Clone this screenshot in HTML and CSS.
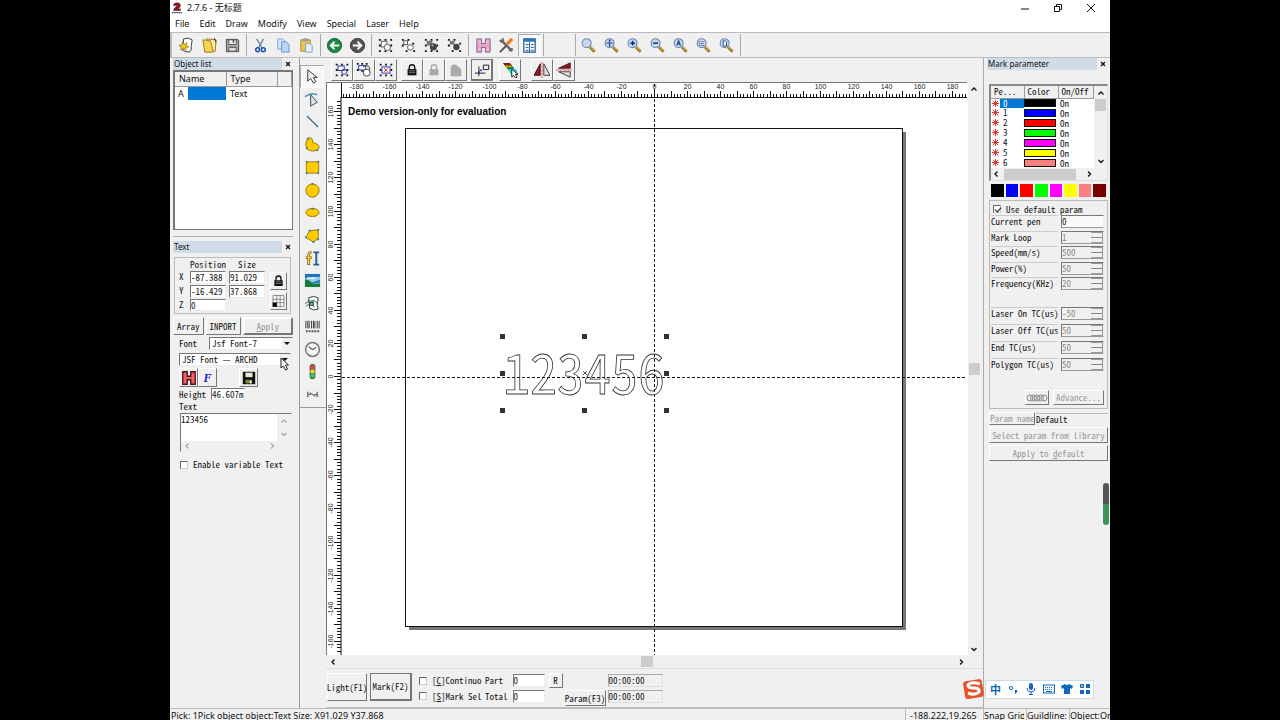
FILE: index.html
```html
<!DOCTYPE html>
<html lang="en">
<head>
<meta charset="utf-8">
<title>2.7.6 - 无标题</title>
<link rel="stylesheet" href="styles.css">
</head>
<body>
<svg class="defs" aria-hidden="true">
  <symbol id="glass" viewBox="0 0 18 18"><path d="M10.500 10.500l5 5" stroke="#94731c" stroke-width="3"/><path d="M10.500 10l4.500 4.500" stroke="#e8cc68" stroke-width="1"/><circle cx="7" cy="6.500" r="4.700" fill="#c5d8f2" stroke="#7189ae" stroke-width="1.200"/></symbol>
  <symbol id="dots" viewBox="0 0 18 18"><path d="M2 2h2v2H2zM8 2h2v2H8zM14 2h2v2h-2zM2 8h2v2H2zM14 8h2v2h-2zM2 14h2v2H2zM8 14h2v2H8zM14 14h2v2h-2z" fill="#111"/></symbol>
  <symbol id="lock" viewBox="0 0 18 18"><path d="M6 9V6q0-3 3-3t3 3v3" fill="none" stroke="currentColor" stroke-width="1.600"/><path d="M4 8h10v7H4z" fill="currentColor"/><path d="M5.500 10h7M5.500 12h7" stroke="#aaa" stroke-width=".7"/></symbol>
  <symbol id="up" viewBox="0 0 8 8"><path d="M1.500 5.500L4 3l2.500 2.500" fill="none" stroke="currentColor" stroke-width="1.300"/></symbol>
  <symbol id="down" viewBox="0 0 8 8"><path d="M1.500 3L4 5.500 6.500 3" fill="none" stroke="currentColor" stroke-width="1.300"/></symbol>
  <symbol id="left" viewBox="0 0 8 8"><path d="M5.500 1.500L3 4l2.500 2.500" fill="none" stroke="currentColor" stroke-width="1.300"/></symbol>
  <symbol id="right" viewBox="0 0 8 8"><path d="M3 1.500L5.500 4 3 6.500" fill="none" stroke="currentColor" stroke-width="1.300"/></symbol>
  <symbol id="cross" viewBox="0 0 8 8"><path d="M2 2l4 4M6 2L2 6" stroke="#111" stroke-width="1.300"/></symbol>
  <symbol id="spark" viewBox="0 0 10 10"><path d="M5 1v8M1 5h8M2 2l6 6M8 2L2 8" stroke="#e02020" stroke-width="1"/></symbol>
  <symbol id="hatch" viewBox="0 0 18 18"><path d="M2 2h5v5h4V2h5v14h-5v-5H7v5H2z" fill="#eaa8bb" stroke="#765da0" stroke-width="1"/><path d="M3 5h3M3 13h3M12 5h3M12 13h3" stroke="#f6d5de"/></symbol>
</svg>
<div class="app">
  <header class="titlebar">
    <svg class="logo" viewBox="0 0 14 14"><path d="M3 4q0-3 4-3t4 3-5 4h5v2H3q0-3 5-6H5z" fill="#a31526" stroke="#301018" stroke-width=".6"/><path d="M1 12.500h12" stroke="#37457d" stroke-width="1.500" stroke-dasharray="2 .6"/></svg>
    <h1>2.7.6 - 无标题</h1>
    <div class="window-buttons">
      <button aria-label="Minimize"><svg viewBox="0 0 12 12"><path d="M2 7h8" stroke="#111"/></svg></button>
      <button aria-label="Restore"><svg viewBox="0 0 12 12"><path d="M2.500 4.500h5v5h-5zM4.500 4V2.500h5v5H8" fill="none" stroke="#111"/></svg></button>
      <button aria-label="Close"><svg viewBox="0 0 12 12"><path d="M2 2l8 8M10 2l-8 8" stroke="#111"/></svg></button>
    </div>
  </header>
  <nav class="menu"><button>File</button><button>Edit</button><button>Draw</button><button>Modify</button><button>View</button><button>Special</button><button>Laser</button><button>Help</button></nav>

  <div class="toolbar">
    <button aria-label="New"><svg viewBox="0 0 18 18"><path d="M6 2q5-2 9 1l-1 7q1 4-2 6-4 0-7-2z" fill="#fff" stroke="#333"/><path d="M5 5l1.500 3 3-2-1 3 3 1.500-3.500.5.500 3-2.500-2L3 14l.500-3L1 9l3-.5z" fill="#f8c81a" stroke="#8a6500" stroke-width=".7"/></svg></button>
    <button aria-label="Open"><svg viewBox="0 0 18 18"><path d="M6 2l10 1-1 12-9 1z" fill="#fff0a0" stroke="#967018"/><path d="M2 3l8 1 3 12-9 0z" fill="#f6d45a" stroke="#a47a12"/><path d="M14 1l2 5" stroke="#333"/></svg></button>
    <button aria-label="Save"><svg viewBox="0 0 18 18"><path d="M2.500 2.500h12l1 1v12h-13z" fill="#aaa" stroke="#444"/><path d="M5 3h8v5H5z" fill="#eee" stroke="#555"/><path d="M5 11h8v4H5z" fill="#ddd" stroke="#555"/><path d="M10 3v3" stroke="#444" stroke-width="1.500"/></svg></button>
    <span class="sep"></span>
    <button aria-label="Cut"><svg viewBox="0 0 18 18"><path d="M5 2l6 10M12 2L7 12" stroke="#7089aa" stroke-width="1.500"/><circle cx="6" cy="13.500" r="2" fill="none" stroke="#1553b0" stroke-width="1.600"/><circle cx="12" cy="13.500" r="2" fill="none" stroke="#1553b0" stroke-width="1.600"/></svg></button>
    <button aria-label="Copy"><svg viewBox="0 0 18 18"><path d="M3 2h5l3 3v8H3z" fill="#d7e6fb" stroke="#7c9ed0"/><path d="M7 5h5l3 3v8H7z" fill="#bad4f7" stroke="#6d91c8"/></svg></button>
    <button aria-label="Paste"><svg viewBox="0 0 18 18"><path d="M3 3h10v12H3z" fill="#eac84e" stroke="#a9862c"/><path d="M6 2h4v2H6z" fill="#bbb" stroke="#888"/><path d="M8 7h5l2 2v7H8z" fill="#e6f0ff" stroke="#84a0c7"/></svg></button>
    <span class="sep"></span>
    <button aria-label="Undo"><svg viewBox="0 0 18 18"><circle cx="9" cy="9" r="7.500" fill="#188a42" stroke="#0d5f2c"/><path d="M14 9H5m4-4L5 9l4 4" fill="none" stroke="#fff" stroke-width="2"/></svg></button>
    <button aria-label="Redo"><svg viewBox="0 0 18 18"><circle cx="9" cy="9" r="7.500" fill="#555" stroke="#333"/><path d="M4 9h9M9 5l4 4-4 4" fill="none" stroke="#fff" stroke-width="2"/></svg></button>
    <span class="sep"></span>
    <button aria-label="Combine"><svg viewBox="0 0 18 18"><use href="#dots"/><rect x="4.500" y="4.500" width="6" height="6" fill="#fff" stroke="#555"/><circle cx="11" cy="11" r="3.300" fill="#fff" stroke="#555"/></svg></button>
    <button aria-label="Uncombine"><svg viewBox="0 0 18 18"><path d="M2 2h2v2H2zM8 2h2v2H8zM2 8h2v2H2zM13 6h2v2h-2zM6 14h2v2H6zM14 14h2v2h-2z" fill="#111"/><rect x="4" y="4" width="4" height="4" fill="#fff" stroke="#555"/><circle cx="11" cy="11" r="3" fill="#fff" stroke="#555"/></svg></button>
    <button aria-label="Group"><svg viewBox="0 0 18 18"><use href="#dots"/><rect x="4" y="4" width="6" height="5" fill="#777"/><circle cx="11" cy="10.500" r="3.800" fill="#444"/><circle cx="10" cy="9" r="1" fill="#bbb"/></svg></button>
    <button aria-label="Ungroup"><svg viewBox="0 0 18 18"><path d="M2 2h2v2H2zM8 2h2v2H8zM2 8h2v2H2zM14 6h2v2h-2zM6 14h2v2H6zM14 14h2v2h-2z" fill="#111"/><rect x="4" y="4" width="5" height="4" fill="#777"/><circle cx="11" cy="10.500" r="3.400" fill="#444"/></svg></button>
    <span class="sep sep-wide"></span>
    <button aria-label="Hatch"><svg viewBox="0 0 18 18"><use href="#hatch"/></svg></button>
    <button aria-label="Settings"><svg viewBox="0 0 18 18"><path d="M3 3l12 12" stroke="#666" stroke-width="2.500"/><path d="M2 3q1 4 4 2L5 1M12 15q0-4 4-2" fill="none" stroke="#666" stroke-width="1.500"/><path d="M2 16l7-7" stroke="#555" stroke-width="2"/><path d="M9 8l6-6" stroke="#ec7f22" stroke-width="3.500"/></svg></button>
    <button class="pressed" aria-label="Object list"><svg viewBox="0 0 18 18"><path d="M3 2h12v14H3z" fill="#fff" stroke="#1d5797" stroke-width="1.300"/><path d="M3 3.500h12" stroke="#2e73bd" stroke-width="3"/><path d="M9 5v11" stroke="#1d5797"/><path d="M5 8h3M5 11h3M5 14h3M10.500 8h3M10.500 11h3M10.500 14h3" stroke="#174b84"/></svg></button>
    <span class="sep sep-end"></span>
    <button aria-label="Zoom window"><svg viewBox="0 0 18 18"><use href="#glass"/></svg></button>
    <button aria-label="Pan"><svg viewBox="0 0 18 18"><use href="#glass"/><path d="M7 3v7M3.500 6.500h7M6 4l1-1 1 1M6 9l1 1 1-1" fill="none" stroke="#18468e"/></svg></button>
    <button aria-label="Zoom in"><svg viewBox="0 0 18 18"><use href="#glass"/><path d="M7 4v5M4.500 6.500h5" stroke="#102c68" stroke-width="1.600"/></svg></button>
    <button aria-label="Zoom out"><svg viewBox="0 0 18 18"><use href="#glass"/><path d="M4.500 6.500h5" stroke="#102c68" stroke-width="1.600"/></svg></button>
    <button aria-label="Zoom all"><svg viewBox="0 0 18 18"><use href="#glass"/><path d="M5 9l2-5 2 5M5.500 7.500h3" fill="none" stroke="#18468e" stroke-width="1.200"/></svg></button>
    <button aria-label="Zoom selection"><svg viewBox="0 0 18 18"><use href="#glass"/><path d="M4 5h6M4 7h6M4 9h6" stroke="#18468e" stroke-dasharray="1 1"/></svg></button>
    <button aria-label="Zoom page"><svg viewBox="0 0 18 18"><use href="#glass"/><path d="M5.500 4h2l1.500 1.500v4H5.500z" fill="#fff" stroke="#18468e"/></svg></button>
    <span class="sep"></span>
  </div>

  <div class="main">
    <aside class="side-left">
      <section>
        <div class="pane-head"><h2>Object list</h2><button aria-label="Close"><svg viewBox="0 0 8 8"><use href="#cross"/></svg></button></div>
        <div class="object-list">
          <table>
            <thead><tr><th class="c-name">Name</th><th class="c-type">Type</th><th></th></tr></thead>
            <tbody><tr><td><div class="name-cell">A<span></span></div></td><td class="type-cell">Text</td><td></td></tr></tbody>
          </table>
        </div>
      </section>
      <section class="text-pane">
        <div class="pane-head"><h2>Text</h2><button aria-label="Close"><svg viewBox="0 0 8 8"><use href="#cross"/></svg></button></div>
        <div class="group pos-group">
          <div class="pos-grid">
            <span></span><span class="pos-title">Position</span><span class="pos-title">Size</span>
            <label for="px">X</label><input id="px" value="-87.388"><input aria-label="Width" value="91.029">
            <label for="py">Y</label><input id="py" value="-16.429"><input aria-label="Height" value="37.868">
            <label for="pz">Z</label><input id="pz" value="0">
          </div>
          <div class="pos-buttons">
            <button class="raised" aria-label="Lock ratio"><svg viewBox="0 0 18 18"><use href="#lock"/></svg></button>
            <button class="raised" aria-label="Anchor"><svg viewBox="0 0 18 18"><path d="M2.500 2.500h13v13h-13zM7 2v14M11 2v14M2 7h14M2 11h14" fill="#fff" stroke="#777"/><path d="M2 11h5v5H2z"/></svg></button>
          </div>
        </div>
        <div class="row actions"><button class="raised">Array</button><button class="raised">INPORT</button><button class="raised grow" disabled><u>A</u>pply</button></div>
        <div class="row font-row"><label for="fonttype">Font</label><select id="fonttype"><option>Jsf Font-7</option></select></div>
        <div class="font-name"><select aria-label="Font name"><option>JSF Font — ARCHD</option></select></div>
        <div class="row font-tools">
          <button class="raised" aria-label="Hatch"><svg viewBox="0 0 18 18"><path d="M2 2h5v5h4V2h5v14h-5v-5H7v5H2z" fill="#f06068" stroke="#481018" stroke-width="1.500"/></svg></button>
          <button class="raised fbtn"><i>F</i></button>
          <button class="raised save" aria-label="Save"><svg viewBox="0 0 18 18"><path d="M2 2h14v14H2z" fill="#111"/><path d="M5 3h8v5H5z" fill="#e8e8d8"/><path d="M5 11h7v4H5z" fill="#838b32"/><path d="M10 12h2v3h-2z" fill="#fff"/></svg></button>
        </div>
        <div class="row height-row"><label for="hh">Height</label><input id="hh" value="46.607m"></div>
        <label class="text-label" for="txt">Text</label>
        <div class="textbox">
          <textarea id="txt">123456</textarea>
          <div class="vs"><svg viewBox="0 0 8 8"><use href="#up"/></svg><svg viewBox="0 0 8 8"><use href="#down"/></svg></div>
          <div class="hs"><svg viewBox="0 0 8 8"><use href="#left"/></svg><svg viewBox="0 0 8 8"><use href="#right"/></svg></div>
        </div>
        <label class="check variable"><input type="checkbox">Enable variable Text</label>
      </section>
      <svg class="pointer" viewBox="0 0 10 14"><path d="M1 1v10l2.500-2 2 4 2-1-2-4h3z" fill="#fff" stroke="#222"/></svg>
    </aside>

    <div class="work">
      <div class="tools">
        <button class="pressed" aria-label="Pick"><svg viewBox="0 0 18 18"><path d="M4 2v12l3-3 3 5 2.500-1.500L10 10h4z" fill="#eef2f7" stroke="#333"/></svg></button>
        <button aria-label="Node"><svg viewBox="0 0 18 18"><path d="M1 6q7-5 13-2" fill="none" stroke="#4e94b6" stroke-width="1.500"/><path d="M7 4v12l7-4z" fill="#dde5ee" stroke="#444"/></svg></button>
        <button aria-label="Line"><svg viewBox="0 0 18 18"><path d="M4 4l10 10" stroke="#345" stroke-width="1.200"/><path d="M3 3h2v2H3zM13 13h2v2h-2z" fill="#4791c5"/></svg></button>
        <button aria-label="Curve"><svg viewBox="0 0 18 18"><path d="M4 2q6-1 5 5 7 1 7 6-2 3-7 3-8-1-7-8z" fill="#fc0" stroke="#9b7400"/><path d="M3 2h2v2H3zM2 12h2v2H2zM13 14h2v2h-2z" fill="#30849a"/></svg></button>
        <button aria-label="Rectangle"><svg viewBox="0 0 18 18"><path d="M2.500 3h13v12h-13z" fill="#fc0" stroke="#a97900"/><path d="M2 2h2v2H2zM14 2h2v2h-2zM2 14h2v2H2zM14 14h2v2h-2z" fill="#30849a"/></svg></button>
        <button aria-label="Circle"><svg viewBox="0 0 18 18"><circle cx="9" cy="9" r="7" fill="#fc0" stroke="#9b7400"/><path d="M8 1h2v2H8z" fill="#30849a"/></svg></button>
        <button aria-label="Ellipse"><svg viewBox="0 0 18 18"><ellipse cx="9" cy="9" rx="7" ry="4.300" fill="#fc0" stroke="#9b7400"/><path d="M8 4h2v2H8z" fill="#30849a"/></svg></button>
        <button aria-label="Polygon"><svg viewBox="0 0 18 18"><path d="M6 4l9-1v9l-5 4-8-5z" fill="#fc0" stroke="#9b7400"/><path d="M5 3h2v2H5zM14 2h2v2h-2zM14 12h2v2h-2zM1 10h2v2H1zM9 15h2v2H9z" fill="#30849a"/></svg></button>
        <button aria-label="Text"><svg viewBox="0 0 18 18"><path d="M8 3Q5 2 5 6v10M2 8h6" fill="none" stroke="#7a5b10" stroke-width="3"/><path d="M8 3Q5 2 5 6v9M2.500 8h5" fill="none" stroke="#fc3" stroke-width="1.600"/><path d="M10 2.500h6M13 3v12M10 15.500h6" stroke="#1e618f" stroke-width="2"/></svg></button>
        <button aria-label="Bitmap"><svg viewBox="0 0 18 18"><path d="M1 2h16v14H1z" fill="#8fd0ee"/><path d="M1 2h16v3q-8 0-16 2z" fill="#2871bd"/><path d="M3 6.500h9" stroke="#fff" stroke-width="1.500"/><path d="M1 8q5 0 9 5l7-1v4H1z" fill="#147a38"/><path d="M8 11l9-3v3l-7 2z" fill="#2c87b0"/></svg></button>
        <button aria-label="Vector file"><svg viewBox="0 0 18 18"><path d="M5 3q5-3 10 0l-1 8 1 4q-5 2-9-1z" fill="#fff" stroke="#333"/><path d="M1 9q9-6 13 0M2 12l9-7M4 5l7 8" fill="none" stroke="#27694f"/><path d="M6 8h4v3H6z" fill="#69b8b5" stroke="#333"/></svg></button>
        <button aria-label="Barcode"><svg viewBox="0 0 18 18"><path d="M2 3v8M4 3v8M5.500 3v8M8 3v8M10 3v8M11.500 3v8M14 3v8M16 3v8" stroke="#333"/><path d="M2 14h14" stroke="#555" stroke-width="2" stroke-dasharray="2 1"/></svg></button>
        <button aria-label="Timer"><svg viewBox="0 0 18 18"><circle cx="9" cy="9" r="7.300" fill="#f6f6f6" stroke="#777" stroke-width="1.600"/><path d="M5 6l4 3 4-2" fill="none" stroke="#555" stroke-width="1.200"/></svg></button>
        <button aria-label="Input port"><svg viewBox="0 0 18 18"><rect x="6" y="1" width="6" height="16" rx="3" fill="#365e43"/><circle cx="9" cy="4.500" r="2.500" fill="#e3414c"/><circle cx="9" cy="9" r="2.500" fill="#f2cb36"/><circle cx="9" cy="13.500" r="2.500" fill="#3dbd60"/></svg></button>
        <button aria-label="Encoder"><svg viewBox="0 0 18 18"><path d="M4 6v6M14 6v6M4 9h3M11 9h3M6 7l6 4" stroke="#555" stroke-width="1.200"/></svg></button>
      </div>
      <div class="center">
        <div class="subbar">
          <button class="raised" aria-label="Transform"><svg viewBox="0 0 18 18"><use href="#dots"/><rect x="4.500" y="4.500" width="7" height="5" fill="#fff" stroke="#2424ae"/><circle cx="11.500" cy="11" r="3" fill="none" stroke="#2424ae"/></svg></button>
          <button class="raised" aria-label="Rotate"><svg viewBox="0 0 18 18"><path d="M1 1h2v2H1zM6 1h2v2H6zM11 1h2v2h-2zM1 8h2v2H1zM6 9h2v2H6z" fill="#111"/><path d="M3 4h8v5H3z" fill="none" stroke="#2424ae"/><path d="M8 5q9-3 7 5" fill="none" stroke="#333"/><circle cx="12" cy="12" r="4" fill="#fff" stroke="#333"/></svg></button>
          <button class="raised" aria-label="Center"><svg viewBox="0 0 18 18"><use href="#dots"/><rect x="4.500" y="5.500" width="9" height="7" fill="#fff" stroke="#2424ae"/><path d="M7 7l4 4M11 7l-4 4" stroke="#d22"/></svg></button>
          <button class="raised g4" aria-label="Lock"><svg viewBox="0 0 18 18"><use href="#lock"/></svg></button>
          <button class="raised dim" aria-label="Unlock"><svg viewBox="0 0 18 18"><use href="#lock"/></svg></button>
          <button class="raised dim" aria-label="Unlock all"><svg viewBox="0 0 18 18"><path d="M3 8q0-6 6-5l6 5v8H3z" fill="currentColor"/></svg></button>
          <button class="raised g4 framed" aria-label="Origin"><svg viewBox="0 0 18 18"><path d="M5.500 5v11M1 12.500h12" stroke="#111"/><path d="M10.500 3.500h6v5h-6z" fill="none" stroke="#111"/><path d="M5 12l4-4" stroke="#33c" stroke-width="2" stroke-dasharray="2 1"/></svg></button>
          <button class="raised g5" aria-label="Order"><svg viewBox="0 0 18 18"><path d="M1 1h8l3 4v3H8V5H4z" fill="#6e241c"/><path d="M3 4h7l3 4H6z" fill="#d4a900"/><path d="M5 6h8l2 4H8z" fill="#078c31"/><path d="M7 8h9l2 6h-8z" fill="#19d8e6"/><path d="M11 8v9l2-2 2 3 2-1-2-3h3z" fill="#fff" stroke="#111"/></svg></button>
          <button class="raised g10" aria-label="Mirror horizontally"><svg viewBox="0 0 18 18"><path d="M7 2v13H0z" fill="#8d1b24" stroke="#391014"/><path d="M11 2v13h7z" fill="#ddd" stroke="#333"/><path d="M9 0v18" stroke="#d33" stroke-dasharray="3 1"/></svg></button>
          <button class="raised" aria-label="Mirror vertically"><svg viewBox="0 0 18 18"><path d="M16 1v6H3z" fill="#8d1b24" stroke="#391014"/><path d="M16 17v-6H3z" fill="#ddd" stroke="#333"/><path d="M0 9h18" stroke="#d33" stroke-dasharray="3 1"/></svg></button>
        </div>
        <div class="canvas-area">
          <svg class="canvas" viewBox="326 82 641 573" preserveAspectRatio="xMinYMin meet">
            <rect x="326" y="82" width="641" height="573" fill="#fff"/>
            <path d="M326 82.500h641M326.500 82v573" stroke="#777"/>
            <path d="M341 97.500h626M341.500 83v15M341 97v558" stroke="#111" fill="none"/>
            <g id="ruler"></g>
            <path d="M409 628.500h496M904.500 132v498" stroke="#777" stroke-width="3"/>
            <rect x="405.500" y="128.500" width="497" height="498" fill="#fff" stroke="#111"/>
            <path d="M654.500 84v571M342 377.500h625" stroke="#111" stroke-dasharray="3 2"/>
            <text class="demo" x="348" y="115">Demo version-only for evaluation</text>
            <text class="engraving" x="503" y="394">123456</text>
            <path d="M583 371l4 4M587 371l-4 4" stroke="#555"/>
            <path d="M500 334h5v5h-5zM582 334h5v5h-5zM664 334h5v5h-5zM500 371h5v5h-5zM664 371h5v5h-5zM500 408h5v5h-5zM582 408h5v5h-5zM664 408h5v5h-5z" fill="#333"/>
          </svg>
          <div class="scroll-v"><svg viewBox="0 0 8 8"><use href="#up"/></svg><span></span><svg viewBox="0 0 8 8"><use href="#down"/></svg></div>
        </div>
        <div class="scroll-h"><svg viewBox="0 0 8 8"><use href="#left"/></svg><span></span><svg viewBox="0 0 8 8"><use href="#right"/></svg></div>
        <div class="marking">
          <button class="raised big">Light(F1)</button>
          <button class="raised big framed">Mark(F2)</button>
          <div class="stack checks"><label class="check"><input type="checkbox"><span>[<u>C</u>]Continuo</span></label><label class="check"><input type="checkbox"><span>[<u>S</u>]Mark Sel</span></label></div>
          <div class="stack"><label for="part">Part</label><label for="total">Total</label></div>
          <div class="stack counts"><input id="part" value="0"><input id="total" value="0"></div>
          <button class="raised reset">R</button>
          <button class="raised param">Param(F3)</button>
          <div class="stack times"><output>00:00:00</output><output>00:00:00</output></div>
        </div>
      </div>
    </div>

    <aside class="side-right">
      <div class="pane-head"><h2>Mark parameter</h2><button aria-label="Close"><svg viewBox="0 0 8 8"><use href="#cross"/></svg></button></div>
      <div class="pens">
        <table>
          <thead><tr><th class="c-pen">Pe...</th><th class="c-color">Color</th><th>On/Off</th></tr></thead>
          <tbody>
            <tr class="on"><td><svg viewBox="0 0 10 10"><use href="#spark"/></svg><b>0</b></td><td><i class="k0"></i></td><td>On</td></tr>
            <tr><td><svg viewBox="0 0 10 10"><use href="#spark"/></svg><b>1</b></td><td><i class="k1"></i></td><td>On</td></tr>
            <tr><td><svg viewBox="0 0 10 10"><use href="#spark"/></svg><b>2</b></td><td><i class="k2"></i></td><td>On</td></tr>
            <tr><td><svg viewBox="0 0 10 10"><use href="#spark"/></svg><b>3</b></td><td><i class="k3"></i></td><td>On</td></tr>
            <tr><td><svg viewBox="0 0 10 10"><use href="#spark"/></svg><b>4</b></td><td><i class="k4"></i></td><td>On</td></tr>
            <tr><td><svg viewBox="0 0 10 10"><use href="#spark"/></svg><b>5</b></td><td><i class="k5"></i></td><td>On</td></tr>
            <tr><td><svg viewBox="0 0 10 10"><use href="#spark"/></svg><b>6</b></td><td><i class="k6"></i></td><td>On</td></tr>
          </tbody>
        </table>
        <div class="pens-v"><svg viewBox="0 0 8 8"><use href="#up"/></svg><span></span><svg viewBox="0 0 8 8"><use href="#down"/></svg></div>
        <div class="pens-h"><svg viewBox="0 0 8 8"><use href="#left"/></svg><span></span><svg viewBox="0 0 8 8"><use href="#right"/></svg></div>
      </div>
      <div class="swatches"><button class="k0" aria-label="Black"></button><button class="k1" aria-label="Blue"></button><button class="k2" aria-label="Red"></button><button class="k3" aria-label="Green"></button><button class="k4" aria-label="Magenta"></button><button class="k5" aria-label="Yellow"></button><button class="k6" aria-label="Pink"></button><button class="k7" aria-label="Maroon"></button></div>
      <div class="group params">
        <label class="check"><input type="checkbox" checked>Use default param</label>
        <div class="fields">
          <label for="f1">Current pen</label><div class="spin plain"><input id="f1" value="0"></div>
          <label for="f2">Mark Loop</label><div class="spin"><input id="f2" value="1" disabled><span></span></div>
          <label for="f3">Speed(mm/s)</label><div class="spin"><input id="f3" value="500" disabled><span></span></div>
          <label for="f4">Power(%)</label><div class="spin"><input id="f4" value="50" disabled><span></span></div>
          <label for="f5">Frequency(KHz)</label><div class="spin"><input id="f5" value="20" disabled><span></span></div>
        </div>
        <div class="fields delays">
          <label for="f6">Laser On TC(us)</label><div class="spin"><input id="f6" value="-50" disabled><span></span></div>
          <label for="f7">Laser Off TC(us</label><div class="spin"><input id="f7" value="50" disabled><span></span></div>
          <label for="f8">End TC(us)</label><div class="spin"><input id="f8" value="50" disabled><span></span></div>
          <label for="f9">Polygon TC(us)</label><div class="spin"><input id="f9" value="50" disabled><span></span></div>
        </div>
        <div class="row adv"><button class="raised" disabled aria-label="Wobble"><svg viewBox="0 0 22 8"><g fill="none" stroke="#888"><circle cx="4" cy="4" r="3"/><circle cx="7.500" cy="4" r="3"/><circle cx="11" cy="4" r="3"/><circle cx="14.500" cy="4" r="3"/><circle cx="18" cy="4" r="3"/></g></svg></button><button class="raised" disabled>Advance...</button></div>
      </div>
      <div class="row pname"><button class="raised" disabled>Param name</button><output>Default</output></div>
      <button class="raised wide" disabled>Select param from library</button>
      <button class="raised wide" disabled><span>Apply to <u>d</u>efault</span></button>
      <div class="level"></div>
    </aside>
  </div>
  <footer class="status"><span class="msg">Pick: 1Pick object object:Text Size: X91.029 Y37.868</span><span class="coords">-188.222,19.265</span><span class="s1">Snap Grid</span><span class="s2">Guildline:</span><span class="s3">Object:On</span></footer>
  <div class="ime">
    <svg class="sogou" viewBox="0 0 24 22"><rect x="2" y="2" width="19" height="18" rx="3" fill="#e5532d" transform="rotate(-9 12 11)"/><path d="M18 6q-9-3-12 1 0 3 6 3t5 4q-4 4-11 1" fill="none" stroke="#fff" stroke-width="3"/></svg>
    <div class="ime-bar">
      <span>中</span>
      <svg viewBox="0 0 12 12"><circle cx="4" cy="5" r="1.600" fill="none" stroke="#1167bd"/><path d="M8 7h2q1 2-2 4" fill="#1167bd"/></svg>
      <svg viewBox="0 0 12 12"><rect x="4" y="0" width="4" height="7" rx="2" fill="#1167bd"/><path d="M2 5q0 4 4 4t4-4M6 9v3M4 11.500h4" fill="none" stroke="#1167bd"/></svg>
      <svg viewBox="0 0 12 12"><rect x=".5" y="2" width="11" height="8" fill="none" stroke="#1167bd"/><path d="M2 4.500h8M2 6.500h8" stroke="#1167bd" stroke-dasharray="1 1"/><path d="M3 8.500h6" stroke="#1167bd"/></svg>
      <svg viewBox="0 0 12 12"><path d="M4 1q2 2 4 0l4 2-1 3-2-1v6H3V5L1 6 0 3z" fill="#1167bd"/></svg>
      <svg viewBox="0 0 12 12"><path d="M1 7h4v4H1zM7 7h4v4H7zM7 1h4v4H7z" fill="#1167bd"/><path d="M1.500 1.500h3v3h-3z" fill="#8ac" stroke="#1167bd"/></svg>
    </div>
  </div>
</div>
<script src="ruler.js"></script>
</body>
</html>
```
FILE: ruler.js
```js
const svgNS = 'http://www.w3.org/2000/svg';
const ruler = document.getElementById('ruler');
const step = 1.655;

function tick(x1, y1, x2, y2) {
  return `M${x1} ${y1}L${x2} ${y2}`;
}

function label(value, x, y, upright) {
  const t = document.createElementNS(svgNS, 'text');
  t.setAttribute('class', 'ruler-label');
  t.setAttribute('x', x);
  t.setAttribute('y', y);
  if (!upright) t.setAttribute('transform', `rotate(-90 ${x} ${y})`);
  t.textContent = value;
  ruler.appendChild(t);
}

let d = '';
for (let v = -188; v <= 188; v += 2) {
  const x = Math.round(654 + v * step) + 0.5;
  if (x < 967) d += tick(x, v % 10 === 0 ? 91 : 94, x, 97);
  if (v % 20 === 0) label(v, x, 89, true);
}
for (let v = -166; v <= 166; v += 2) {
  const y = Math.round(376 - v * step) + 0.5;
  d += tick(v % 10 === 0 ? 334 : 337, y, 341, y);
  if (v % 20 === 0) label(v, 333, y, false);
}
const path = document.createElementNS(svgNS, 'path');
path.setAttribute('d', d);
path.setAttribute('stroke', '#111');
ruler.appendChild(path);
```
FILE: styles.css
```css
* { box-sizing: border-box; }
body { margin: 0; padding: 0 170px; background: #000; color: #111; font: 9px/12px "Noto Sans", "Noto Sans CJK SC", sans-serif; }
.defs { display: none; }
button, input, select, textarea { font: inherit; color: inherit; margin: 0; padding: 0; border: 0; background: none; border-radius: 0; min-width: 0; }
svg { display: block; }
h1, h2 { margin: 0; font: inherit; }
.app { position: relative; display: flex; flex-direction: column; height: 100vh; background: #f0f0f0; overflow: hidden; }

.titlebar { display: flex; align-items: center; height: 16px; background: #fff; padding-left: 1px; }
.logo { width: 12px; height: 14px; margin-right: 4px; }
.window-buttons { display: flex; margin-left: auto; padding-right: 3px; }
.window-buttons button { width: 33px; display: flex; justify-content: center; }
.window-buttons svg { width: 12px; height: 12px; }
.menu { display: flex; height: 16px; gap: 10px; padding-left: 5px; background: #fff; }
.menu button { line-height: 16px; }

.toolbar { display: flex; align-items: center; height: 26px; padding-left: 3px; border: 1px solid #bbb; border-width: 1px 0 1px 2px; }
.toolbar button { width: 23px; height: 23px; display: flex; align-items: center; justify-content: center; }
.toolbar svg { width: 17px; height: 17px; }
.sep { width: 1px; height: 22px; margin: 0 2px; background: #aaa; }
.sep-wide { margin: 0 3px 0 2px; }
.sep-end { width: 33px; margin: 0 1px 0 2px; border: 1px solid #aaa; border-width: 0 1px; background: #f0f0f0; }
.pressed { border: 1px solid #aaa; border-right-color: #fff; border-bottom-color: #fff; background: #f8f8f8; }

.main { flex: 1; min-height: 0; display: flex; }
.side-left, .side-right, .marking { font: 9px/11px "Noto Sans Mono CJK SC", "Liberation Mono", monospace; }
.side-left { position: relative; width: 130px; padding: 0 6px 0 3px; border-right: 1px solid #999; }
.pane-head { display: flex; height: 12px; align-items: center; font: 8px/12px "Noto Sans", sans-serif; }
.pane-head h2 { flex: 1; background: #d0dde9; padding-left: 1px; }
.pane-head button { width: 11px; }
.pane-head svg { width: 8px; height: 8px; margin: auto; }
.object-list { height: 160px; border: 1px solid #777; border-width: 2px 1px 1px 2px; background: #fff; font: 9px/13px "Noto Sans", sans-serif; }
.object-list table, .pens table { border-collapse: collapse; width: 100%; table-layout: fixed; }
.object-list th { height: 14px; padding: 0 4px; text-align: left; font-weight: 400; background: #f0f0f0; border: 1px solid #999; border-width: 0 1px 1px 0; }
.object-list td { padding: 0; height: 13px; }
.c-name { width: 51px; }
.c-type { width: 51px; }
.name-cell { display: flex; gap: 4px; padding-left: 3px; }
.name-cell span { flex: 1; background: #0078d7; }
.object-list .type-cell { padding-left: 4px; }
.text-pane { margin-top: 6px; border-top: 1px solid #aaa; padding-top: 4px; }

.group { border: 1px solid #bbb; }
.pos-group { display: flex; gap: 5px; margin: 4px 2px 3px 1px; padding: 1px 1px 2px 4px; }
.pos-grid { display: grid; grid-template-columns: 8px 36px 36px; grid-template-rows: 11px 13px 13px 12px; gap: 1px 3px; align-items: stretch; }
.pos-title { text-align: center; }
.pos-grid input, .height-row input, .counts input, .spin, .textbox, select { background: #fff; border: 1px solid #eee; border-top-color: #777; border-left-color: #777; }
.pos-buttons { display: flex; flex-direction: column; gap: 2px; padding-top: 13px; }
.pos-buttons button { width: 17px; height: 18px; }
.raised { display: flex; align-items: center; justify-content: center; white-space: nowrap; border: 1px solid #fff; border-right-color: #777; border-bottom-color: #777; background: #f0f0f0; }
.raised svg { width: 16px; height: 16px; }
.raised:disabled { color: #999; }
.row { display: flex; align-items: center; }
.actions button { height: 18px; padding: 0 3px; }
.actions { gap: 2px; }
.actions .grow { flex: 1; border-width: 2px; }
.font-row { margin-top: 2px; padding-left: 6px; justify-content: space-between; }
.font-row select { width: 84px; }
select { height: 13px; appearance: none; padding-left: 2px; background: #fff linear-gradient(#f0f0f0, #f0f0f0) right / 10px 100% no-repeat; }
.font-row, .font-name { position: relative; }
.font-row::after, .font-name::after { content: ""; position: absolute; right: 3px; top: 5px; border: 3px solid transparent; border-top-color: #111; border-bottom: 0; }
.font-name { display: flex; width: 112px; margin: 3px 0 2px 6px; }
.font-name select { flex: 1; }
.font-tools { padding-left: 6px; }
.font-tools button { width: 19px; height: 19px; }
.font-tools .save { margin-left: 22px; }
.fbtn { color: #1a1ad0; font: bold 12px/14px "Liberation Serif", serif; }
.height-row { padding-left: 6px; gap: 5px; height: 14px; }
.height-row input { width: 34px; height: 12px; }
.text-label { display: block; margin-left: 6px; height: 12px; }
.textbox { display: grid; grid-template: 27px 10px / 1fr 14px; width: 112px; margin-left: 7px; }
textarea { resize: none; overflow: hidden; width: 100%; height: 100%; padding: 0; }
.vs, .hs { background: #f0f0f0; color: #aaa; display: flex; justify-content: space-between; align-items: center; }
.vs { flex-direction: column; padding: 3px 0; }
.hs { grid-column: 1 / 3; padding: 0 15px 0 2px; }
.vs svg, .hs svg { width: 8px; height: 8px; }
.check { display: flex; align-items: center; gap: 5px; white-space: pre; }
.check input { appearance: none; position: relative; width: 8px; height: 8px; background: #fff; border: 1px solid #ccc; border-top-color: #666; border-left-color: #666; flex: none; }
.check input:checked::after { content: ""; position: absolute; left: 2px; top: 0; width: 3px; height: 5px; border: solid #111; border-width: 0 1px 1px 0; transform: rotate(40deg); }
.variable { margin: 7px 0 0 7px; }
.pointer { position: absolute; left: 110px; top: 299px; width: 10px; height: 14px; }

.work { flex: 1; min-width: 0; display: flex; }
.tools { width: 26px; height: 350px; padding: 7px 2px 1px 0; display: grid; grid-auto-rows: 1fr; border-bottom: 1px solid #999; }
.tools button { display: flex; align-items: center; justify-content: center; }
.tools svg { width: 17px; height: 17px; }
.center { flex: 1; min-width: 0; display: flex; flex-direction: column; border-right: 1px solid #aaa; }
.subbar { display: flex; height: 24px; padding: 1px 0 1px 5px; }
.subbar button { width: 22px; height: 22px; }
.subbar .g4 { margin-left: 4px; }
.subbar .g5 { margin-left: 6px; }
.subbar .g10 { margin-left: 10px; }
.dim { color: #aaa; }
.framed { border: 1px solid #777; border-width: 1px 2px 2px 1px; }
.canvas-area { flex: 1; min-height: 0; display: flex; }
.canvas { flex: 1; min-width: 0; height: 100%; background: #fff; }
.ruler-label { font: 7px "Liberation Sans", sans-serif; text-anchor: middle; fill: #222; }
.demo { font: bold 10px "Liberation Sans", sans-serif; }
.engraving { font: 100 54px "Noto Sans Mono CJK SC", "Liberation Sans", sans-serif; fill: none; stroke: #333; stroke-width: 0.8; }
.scroll-v { width: 15px; display: flex; flex-direction: column; align-items: center; justify-content: space-between; padding: 3px 3px 2px 0; }
.scroll-v span { width: 11px; height: 12px; background: #ccc; }
.scroll-v svg, .scroll-h svg { width: 8px; height: 8px; }
.scroll-h { display: flex; align-items: center; justify-content: space-between; height: 13px; padding: 0 18px 0 3px; }
.scroll-h span { width: 12px; height: 11px; background: #ccc; }
.marking { display: flex; height: 40px; padding: 4px 0 1px 1px; border-top: 1px solid #ddd; border-bottom: 1px solid #bbb; }
.big { width: 40px; height: 28px; margin-right: 3px; }
.big.framed { width: 42px; }
.stack { display: flex; flex-direction: column; height: 31px; justify-content: space-around; }
.checks { padding-left: 4px; width: 70px; }
.counts { padding-left: 5px; }
.counts input { width: 32px; height: 13px; }
.reset { width: 14px; height: 15px; margin: 0 2px 0 4px; }
.param { width: 41px; height: 16px; align-self: flex-end; }
.times { padding-left: 2px; }
.times output { width: 55px; height: 13px; border: 1px solid #ddd; border-top-color: #aaa; border-left-color: #aaa; }

.side-right { position: relative; width: 126px; padding: 0 2px 0 5px; }
.side-right .pane-head { margin-left: -2px; }
.pens { display: grid; grid-template: 82px 12px / 1fr 13px; margin-top: 14px; border: 1px solid #888; border-width: 2px 1px 1px 2px; border-right-color: #ddd; border-bottom-color: #ddd; background: #fff; overflow: hidden; }
.pens table { line-height: 9px; }
.pens th { height: 12px; padding: 0 0 0 3px; font-weight: 400; text-align: left; background: #f0f0f0; border: 1px solid #999; border-width: 0 1px 1px 0; }
.pens td { height: 9px; padding: 0 2px; }
.c-pen { width: 33px; }
.c-color { width: 34px; }
.pens td:first-child { display: flex; align-items: center; padding: 0; }
.pens td svg { width: 9px; height: 9px; }
.pens b { flex: 1; font-weight: 400; padding-left: 3px; }
.pens .on b { background: #0078d7; color: #fff; }
.pens i { display: block; height: 8px; width: 32px; margin-left: -2px; border: 1px solid #111; }
.pens-v, .pens-h { display: flex; align-items: center; background: #f0f0f0; }
.pens-v { flex-direction: column; padding: 3px 0; }
.pens-v span { width: 11px; height: 12px; margin: 2px 0 auto; background: #ccc; }
.pens-h { grid-column: 1 / 3; padding: 0 14px 0 1px; }
.pens-h span { width: 72px; height: 11px; margin: 0 auto 0 4px; background: #ccc; }
.pens-v svg, .pens-h svg { width: 8px; height: 8px; }
.swatches { display: grid; grid-template-columns: repeat(8, 1fr); gap: 2px; height: 13px; margin: 3px 2px 3px 2px; }
.k0 { background: #000; } .k1 { background: #00f; } .k2 { background: #f00; } .k3 { background: #0f0; }
.k4 { background: #f0f; } .k5 { background: #ff0; } .k6 { background: #fa8080; } .k7 { background: #780000; }
.params { height: 209px; padding: 2px 3px 2px 1px; }
.params .check { margin-left: 2px; height: 12px; }
.fields { display: grid; grid-template-columns: 67px 1fr; column-gap: 3px; height: 78px; grid-auto-rows: 1fr; }
.fields label { white-space: nowrap; overflow: hidden; height: 12px; border-top: 1px solid #ccc; }
.delays { margin-top: 14px; height: 68px; }
.spin { display: flex; height: 13px; color: #888; background: #f0f0f0; border-bottom-color: #999; }
.spin input { flex: 1; width: 20px; }
.spin span { width: 12px; border: 1px solid #999; border-width: 1px 1px 1px 0; background: linear-gradient(#888, #888) center / 100% 1px no-repeat; }
.plain { color: #111; background: #fafafa; }
.adv { justify-content: flex-end; gap: 4px; margin-top: 15px; }
.adv button { height: 15px; width: 51px; }
.adv button:first-child { width: 24px; }
.adv svg { width: 22px; height: 8px; }
.pname { margin-top: 3px; height: 13px; gap: 1px; }
.pname button { width: 46px; height: 13px; overflow: hidden; justify-content: flex-start; }
.pname output { flex: 1; border-top: 1px solid #bbb; }
.wide { width: 100%; height: 16px; margin-top: 2px; }
.level { position: absolute; right: 1px; top: 425px; width: 6px; height: 42px; border-radius: 3px; background: linear-gradient(#555 50%, #3b9457 50%); }

.status { display: flex; height: 12px; white-space: nowrap; overflow: hidden; font: 9px/14px "Noto Sans", sans-serif; gap: 2px; border-top: 1px solid #bbb; }
.status span { overflow: hidden; border-left: 1px solid #bbb; }
.status .msg { flex: 1; border: 0; padding-left: 1px; }
.coords { width: 76px; padding-left: 4px; }
.s1 { width: 41px; } .s2 { width: 41px; } .s3 { width: 41px; }

.ime { position: absolute; right: 16px; bottom: 19px; display: flex; align-items: center; }
.sogou { width: 24px; height: 24px; margin-right: -1px; z-index: 1; }
.ime-bar { display: flex; align-items: center; gap: 6px; height: 19px; padding: 0 2px 0 4px; background: #fff; border: 1px solid #ccdbe8; color: #1167bd; font: bold 11px/16px "Noto Sans CJK SC", sans-serif; }
.ime-bar svg { width: 12px; height: 12px; }
```
